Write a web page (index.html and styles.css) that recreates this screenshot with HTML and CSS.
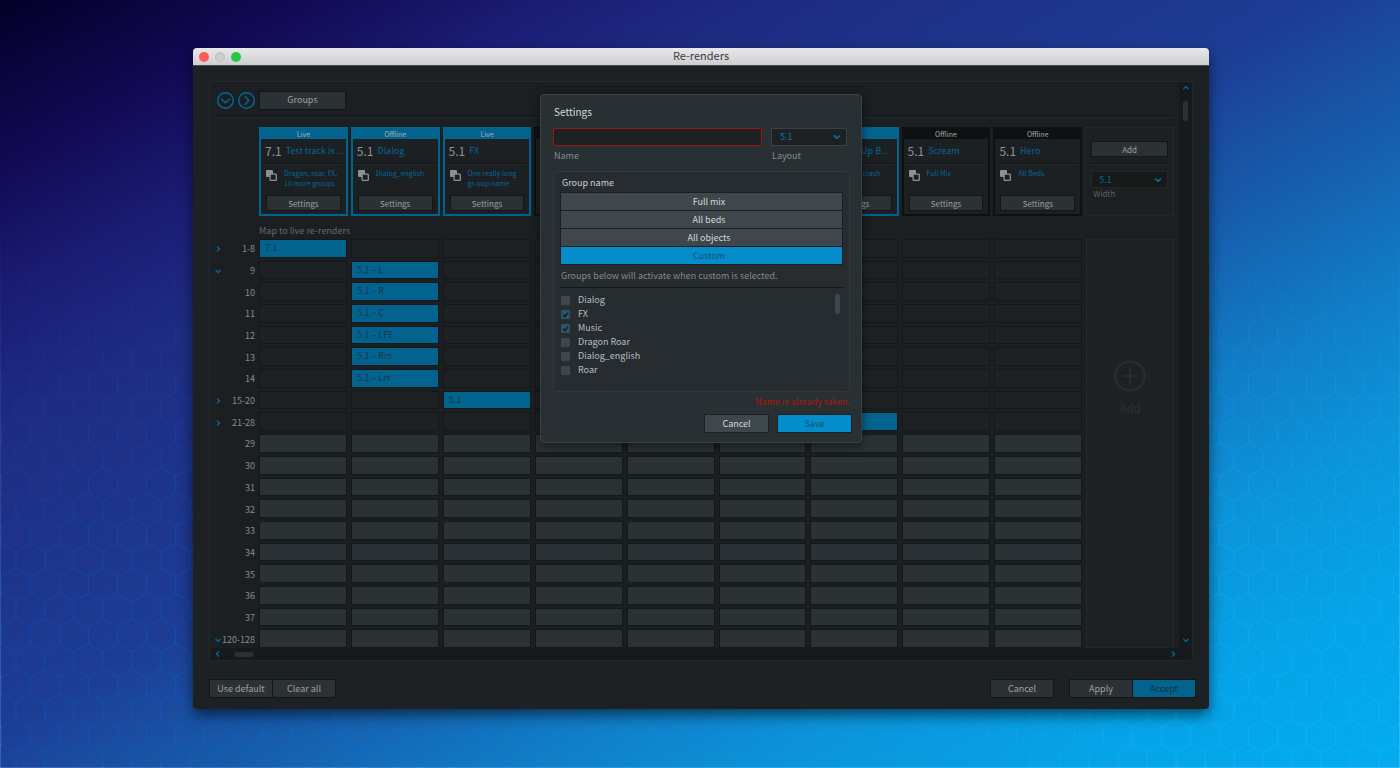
FILE: index.html
```html
<!DOCTYPE html>
<html lang="en">
<head>
  <meta charset="UTF-8" />
  <meta name="viewport" content="width=device-width, initial-scale=1.0" />
  <title>Re-renders</title>
  <link rel="stylesheet" href="styles.css">
</head>
<body>
  <svg class="hexes" aria-hidden="true">
    <defs>
      <pattern id="hex" width="29" height="50.25" patternUnits="userSpaceOnUse" patternTransform="translate(16 15.7)">
        <path d="M0 0 14.5 8.3 29 0M14.5 8.3V25.1M0 33.4 14.5 25.1 29 33.4M0 33.4V50.25M29 33.4V50.25" />
      </pattern>
      <linearGradient id="line-color">
        <stop offset="0" stop-color="#0852c8" />
        <stop offset="0.5" stop-color="#0488e0" />
        <stop offset="0.85" stop-color="#0cb8f6" />
      </linearGradient>
      <mask id="hex-mask">
        <rect width="100%" height="100%" fill="url(#hex)" />
      </mask>
    </defs>
    <rect width="100%" height="100%" fill="url(#line-color)" mask="url(#hex-mask)" />
  </svg>

  <div class="window">
    <header class="titlebar">
      <span class="light close"></span>
      <span class="light minimize"></span>
      <span class="light zoom"></span>
      <h1>Re-renders</h1>
    </header>

    <main class="content">
      <div class="panel">
        <div class="panel-main">
          <div class="toolbar">
            <button class="round" aria-label="Expand all">
              <svg viewBox="0 0 16 16"><circle cx="8" cy="8" r="7.3" /><path d="M3.8 6.4 8 10.2l4.2-3.8" /></svg>
            </button>
            <button class="round" aria-label="Collapse all">
              <svg viewBox="0 0 16 16"><circle cx="8" cy="8" r="7.3" /><path d="M6.4 3.8 10.2 8l-3.8 4.2" /></svg>
            </button>
            <button class="btn groups">Groups</button>
          </div>
          <hr class="rule">

          <div class="cards" id="cards">
            <section class="add-card">
              <button class="btn small">Add</button>
              <hr class="rule">
              <select id="width" class="dark-select"><option>5.1</option></select>
              <label for="width">Width</label>
            </section>
          </div>

          <p class="map-label">Map to live re-renders</p>
          <table class="matrix" aria-label="Map to live re-renders">
            <tbody id="matrix"></tbody>
          </table>

          <div class="scroll-x">
            <svg class="arrow" viewBox="0 0 8 8"><path d="M5 1.5 2.5 4 5 6.5" /></svg>
            <span class="thumb"></span>
            <svg class="arrow" viewBox="0 0 8 8"><path d="M3 1.5 5.5 4 3 6.5" /></svg>
          </div>
        </div>
        <div class="scroll-y">
          <svg class="arrow" viewBox="0 0 8 8"><path d="M1.5 5 4 2.5 6.5 5" /></svg>
          <span class="thumb"></span>
          <svg class="arrow" viewBox="0 0 8 8"><path d="M1.5 3 4 5.5 6.5 3" /></svg>
        </div>
      </div>

      <footer class="footer">
        <div class="joined">
          <button class="btn">Use default</button>
          <button class="btn">Clear all</button>
        </div>
        <button class="btn cancel">Cancel</button>
        <div class="joined">
          <button class="btn">Apply</button>
          <button class="btn accept">Accept</button>
        </div>
      </footer>
    </main>

    <dialog class="settings" open aria-labelledby="settings-title">
      <h2 id="settings-title">Settings</h2>
      <div class="fields">
        <div class="field name">
          <input type="text" id="name">
          <label for="name">Name</label>
        </div>
        <div class="field layout">
          <select id="layout"><option>5.1</option></select>
          <label for="layout">Layout</label>
        </div>
      </div>

      <section class="group-box">
        <h3>Group name</h3>
        <div class="choices">
          <button>Full mix</button>
          <button>All beds</button>
          <button>All objects</button>
          <button class="selected">Custom</button>
        </div>
        <p class="hint">Groups below will activate when custom is selected.</p>
        <hr class="rule">
        <div class="group-list">
          <div class="checks">
            <label><input type="checkbox"> Dialog</label>
            <label><input type="checkbox" checked> FX</label>
            <label><input type="checkbox" checked> Music</label>
            <label><input type="checkbox"> Dragon Roar</label>
            <label><input type="checkbox"> Dialog_english</label>
            <label><input type="checkbox"> Roar</label>
          </div>
          <span class="thumb"></span>
        </div>
      </section>

      <p class="error">Name is already taken.</p>
      <div class="actions">
        <button class="dialog-cancel">Cancel</button>
        <button class="save">Save</button>
      </div>
    </dialog>
  </div>

  <script src="script.js"></script>
</body>
</html>
```
FILE: script.js
```js
// One card per re-render
const tracks = [
  { state: "Live", layout: "7.1", name: "Test track is …", groups: "Dragon, roar, FX, 10 more groups", on: true },
  { state: "Offline", layout: "5.1", name: "Dialog", groups: "Dialog_english", on: true },
  { state: "Live", layout: "5.1", name: "FX", groups: "One really long gr-oup name", on: true },
  { state: "Offline", layout: "5.1", name: "", groups: "" },
  { state: "Offline", layout: "5.1", name: "", groups: "" },
  { state: "Offline", layout: "5.1", name: "", groups: "" },
  { state: "Live", layout: "7.1", name: "Wake Up B…", groups: "Window crash", on: true },
  { state: "Offline", layout: "5.1", name: "Scream", groups: "Full Mix" },
  { state: "Offline", layout: "5.1", name: "Hero", groups: "All Beds" }
];

// label, arrow, column of the mapped cell, text of the mapped cell
const rows = [
  ["1-8", "right", 0, "7.1"],
  ["9", "down", 1, "5.1 – L"],
  ["10", "", 1, "5.1 – R"],
  ["11", "", 1, "5.1 – C"],
  ["12", "", 1, "5.1 – LFE"],
  ["13", "", 1, "5.1 – Rrs"],
  ["14", "", 1, "5.1 – Lrs"],
  ["15-20", "right", 2, "5.1"],
  ["21-28", "right", 6, ""],
  ["29"], ["30"], ["31"], ["32"], ["33"], ["34"], ["35"], ["36"], ["37"],
  ["120-128", "down"]
];

const arrows = {
  right: '<svg class="arrow" viewBox="0 0 8 8"><path d="M3 1.5 5.5 4 3 6.5" /></svg>',
  down: '<svg class="arrow" viewBox="0 0 8 8"><path d="M1.5 3 4 5.5 6.5 3" /></svg>'
};

function renderCards() {
  const html = tracks.map(t => `
    <section class="card ${t.on ? "on" : ""}">
      <div class="state">${t.state}</div>
      <h2><span class="layout-tag">${t.layout}</span><span class="track-name">${t.name.replace("…", '<span class="dots">…</span>')}</span></h2>
      <hr class="rule">
      <div class="track-groups">
        <svg viewBox="0 0 11 11"><rect class="back" width="7" height="7" rx="1" /><rect class="front" x="4.1" y="4.1" width="6.2" height="6.2" rx="0.6" /></svg>
        <p>${t.groups}</p>
      </div>
      <button class="btn small">Settings</button>
    </section>`).join("");
  document.getElementById("cards").insertAdjacentHTML("afterbegin", html);
}

function renderMatrix() {
  const body = document.getElementById("matrix");
  rows.forEach(([label, arrow, column, text], index) => {
    const tr = document.createElement("tr");
    if (column === undefined) tr.className = "free";
    let html = `<th scope="row">${arrows[arrow] || ""}<span>${label}</span></th>`;
    for (let i = 0; i < tracks.length; i++) {
      html += i === column ? `<td class="mapped">${text}</td>` : "<td></td>";
    }
    if (index === 0) {
      html += `<td class="add-column" rowspan="${rows.length}"><button class="add-big">
        <svg viewBox="0 0 32 32"><circle cx="16" cy="16" r="14.5" /><path d="M16 8v16M8 16h16" /></svg>Add</button></td>`;
    }
    tr.innerHTML = html;
    body.appendChild(tr);
  });
}

renderCards();
renderMatrix();
```
FILE: styles.css
```css
* {
  box-sizing: border-box;
}

body {
  margin: 0;
  min-height: 100vh;
  padding: 48px 191px 59px 193px;
  display: flex;
  font-family: "Noto Sans CJK SC", "Noto Sans", sans-serif;
  font-size: 9px;
  line-height: 14px;
  color: #8f9395;
  background: linear-gradient(to bottom right, #020028 0%, #120a55 11%, #1b1d75 20%, #1e2c82 28%, #1d3c94 47%, #1660ae 59%, #117cc6 68%, #0c93d9 77%, #06a3e8 88%, #03acef 100%);
}

h1, h2, h3, p {
  margin: 0;
  font-size: 9px;
  font-weight: 400;
}

button, input, select {
  font: inherit;
  color: inherit;
  margin: 0;
  padding: 0;
  border: none;
  border-radius: 0;
  background: none;
}

svg {
  fill: none;
  stroke: currentColor;
}

.hexes {
  position: absolute;
  inset: 0;
  width: 100%;
  height: 100%;
  stroke: #fff;
  opacity: 0.6;
  mask-image: linear-gradient(to bottom, transparent 26%, #000 95%);
}

/* Window */
.window {
  position: relative;
  flex: 1;
  display: flex;
  flex-direction: column;
  border-radius: 4px;
  background: #1d2123;
  box-shadow: 0 6px 14px rgba(0, 0, 0, 0.55);
}

.titlebar {
  display: flex;
  align-items: center;
  gap: 6px;
  height: 18px;
  padding: 0 6px;
  border-radius: 4px 4px 0 0;
  border-bottom: 1px solid #4a4d4f;
  background: linear-gradient(#e8e7e9, #cfced0);
}

.titlebar h1 {
  flex: 1;
  margin-right: 48px;
  padding-bottom: 3px;
  font-size: 11px;
  text-align: center;
  color: #3c3c3e;
}

.light {
  width: 10px;
  height: 10px;
  border-radius: 50%;
}

.close { background: #fc5b57; }
.minimize { background: #cdcccd; border: 1px solid #c0bfc0; }
.zoom { background: #27c840; }

.content {
  flex: 1;
  display: flex;
  flex-direction: column;
  padding: 15px 13px 11px 16px;
}

.panel {
  flex: 1;
  display: flex;
  margin-right: 3px;
  border: 1px solid #24292b;
  border-radius: 4px;
  background: #1b1f21;
  overflow: hidden;
}

.panel-main {
  flex: 1;
  display: flex;
  flex-direction: column;
  min-width: 0;
  padding: 0 5px 0 6px;
}

.rule {
  width: 100%;
  height: 2px;
  margin: 0;
  border: none;
  border-top: 1px solid #121516;
  background: #262b2d;
}

.btn {
  height: 19px;
  line-height: 16px;
  border: 1px solid #131617;
  background: #2b3235;
  color: #9da0a2;
}

.btn.small {
  height: 16px;
  font-size: 8px;
  line-height: 13px;
}

/* Toolbar */
.toolbar {
  display: flex;
  align-items: center;
  gap: 4px;
  height: 34px;
  padding: 2px 0 0 1px;
}

.round {
  width: 17px;
  height: 17px;
  color: #046795;
}

.round svg {
  display: block;
  width: 17px;
  height: 17px;
  stroke-width: 1.4;
}

.groups {
  width: 87px;
}

/* Cards */
.cards {
  display: grid;
  grid-template-columns: repeat(10, minmax(0, 1fr));
  gap: 3px;
  margin-top: 9px;
  margin-left: 43px;
}

.card {
  display: flex;
  flex-direction: column;
  height: 89px;
  border: 2px solid #0e1011;
  background: #1c2022;
}

.state {
  flex: none;
  height: 10px;
  font-size: 7px;
  line-height: 10px;
  text-align: center;
  background: #0e1011;
  color: #a5a8aa;
}

.on { border-color: #02638f; }
.on .state { background: #02638f; color: #a5b0b5; }

.card h2 {
  flex: none;
  display: flex;
  align-items: center;
  gap: 4px;
  height: 24px;
  padding: 0 0 0 4px;
  color: #04679a;
}

.layout-tag {
  font-size: 12px;
  color: #8f9395;
}

.track-name {
  white-space: nowrap;
}

.dots {
  font-family: "Open Sans", sans-serif;
}

.card .rule,
.add-card .rule {
  width: auto;
  margin: 0 3px;
  flex: none;
}

.track-groups {
  flex: 1;
  display: flex;
  gap: 7px;
  padding: 3px 4px 0 5px;
  line-height: 10px;
  color: #04679a;
}

.track-groups p {
  font-size: 7px;
}

.track-groups svg {
  flex: none;
  width: 11px;
  height: 11px;
  margin-top: 2px;
  color: #8b9194;
}

.back {
  fill: currentColor;
  stroke: none;
}

.front {
  fill: #1c2022;
  stroke-width: 1.3;
}

.card .btn {
  margin: 0 5px 3px;
}

.add-card {
  display: flex;
  flex-direction: column;
  padding: 13px 5px 0;
  border: 1px solid #222729;
  background: #1c2022;
}

.add-card .rule {
  margin: 6px -2px;
}

.add-card label {
  padding: 0 2px;
  font-size: 8px;
  line-height: 11px;
  color: #5c6062;
}

select {
  appearance: none;
  height: 18px;
  padding: 0 8px;
  border: 1px solid #3a4144;
  color: #0579ae;
  background: #1d2123 url("data:image/svg+xml,%3Csvg xmlns='http://www.w3.org/2000/svg' viewBox='0 0 8 6' fill='none' stroke='%230579ae' stroke-width='1.5'%3E%3Cpath d='M1 1.5 4 4.3 7 1.5'/%3E%3C/svg%3E") no-repeat right 5px center / 8px 6px;
}

.dark-select {
  height: 17px;
  padding: 0 7px;
  border-color: #222729;
  color: #04679a;
  background-color: #151a19;
}

/* Matrix */
.map-label {
  padding: 8px 0 1px 43px;
  color: #66696b;
}

.matrix {
  flex: 1;
  display: grid;
  grid-template-columns: 39px repeat(10, minmax(0, 1fr));
  grid-auto-rows: minmax(16px, 1fr);
  gap: 3px 4px;
}

.matrix tbody,
.matrix tr {
  display: contents;
}

.matrix th {
  display: flex;
  align-items: center;
  justify-content: space-between;
  padding: 2px 0 0;
  font-weight: 400;
  color: #868a8c;
}

.matrix th span {
  margin-left: auto;
}

.arrow {
  flex: none;
  width: 8px;
  height: 8px;
  margin-left: -2px;
  color: #046795;
  stroke-width: 1.4;
}

.matrix th .arrow {
  margin-right: -4px;
}

.matrix td {
  padding: 0 5px;
  border: 1px solid #15181a;
  background: #1d2123;
}

.matrix .free td {
  background: #2b3235;
}

.matrix td.mapped {
  background: #02638f;
  line-height: 16px;
  color: #1a3645;
}

.matrix td.add-column {
  grid-column: 11;
  grid-row: 1 / span 19;
  display: flex;
  align-items: flex-start;
  justify-content: center;
  padding-top: 120px;
  border-color: #222729;
  background: #1d2123;
}

.add-big {
  display: flex;
  flex-direction: column;
  align-items: center;
  gap: 9px;
  font-size: 11px;
  font-weight: 700;
  color: #272c2e;
}

.add-big svg {
  width: 32px;
  height: 32px;
  stroke-width: 2.6;
}

/* Scroll bars */
.scroll-x {
  display: flex;
  align-items: center;
  height: 12px;
  margin: 0 -5px 0 -6px;
  padding: 0 2px 0 6px;
  background: #171a1c;
}

.scroll-x .arrow:last-child {
  margin-left: auto;
}

.scroll-x .thumb {
  width: 20px;
  height: 5px;
  margin-left: 12px;
}

.thumb {
  border-radius: 3px;
  background: #2b3235;
}

.scroll-y {
  display: flex;
  flex-direction: column;
  align-items: center;
  justify-content: space-between;
  width: 13px;
  padding: 2px 0 16px;
  background: #171a1c;
}

.scroll-y .arrow {
  margin-left: 0;
}

.scroll-y .thumb {
  width: 5px;
  height: 20px;
  margin: 9px 0 auto;
}

/* Footer */
.footer {
  display: flex;
  gap: 15px;
  margin-top: 18px;
}

.footer .btn {
  width: 64px;
}

.joined {
  display: flex;
}

.joined .btn + .btn {
  margin-left: -1px;
}

.footer .cancel {
  margin-left: auto;
}

.btn.accept {
  background: #02638f;
  color: #17323f;
}

/* Settings dialog */
.settings {
  position: absolute;
  top: 46px;
  right: 0;
  left: 0;
  width: 322px;
  margin: 0 auto;
  padding: 10px 11px 9px 12px;
  border: 1px solid #3a4144;
  border-radius: 4px;
  background: #293033;
  color: #b8bec1;
  box-shadow: 0 3px 10px rgba(0, 0, 0, 0.5);
}

.settings h2 {
  padding-left: 1px;
  font-size: 10px;
  color: #d8dbdd;
}

.fields {
  display: flex;
  gap: 9px;
  margin-top: 9px;
  padding-right: 3px;
}

.field {
  display: flex;
  flex-direction: column;
}

.field.name {
  flex: 1;
}

.field.layout {
  width: 76px;
}

.field input {
  height: 18px;
  padding: 0 6px;
  border: 1px solid #a01510;
  border-radius: 1px;
  background: #1d2123;
}

.field label {
  padding: 3px 1px 0;
  color: #858b8e;
}

.group-box {
  margin: 8px 0 0;
  padding: 4px 6px 14px;
  border: 1px solid #32393c;
  border-radius: 4px;
  background: #262c2f;
}

.group-box h3 {
  padding-left: 2px;
  color: #ccd0d2;
}

.choices {
  display: flex;
  flex-direction: column;
  gap: 1px;
  margin-top: 2px;
  padding: 1px;
  background: #1b1f21;
}

.choices button {
  height: 17px;
  padding-left: 15px;
  line-height: 17px;
  background: #3e474b;
  color: #d5d8da;
}

.choices .selected {
  background: #058dcb;
  color: #14506f;
}

.hint {
  padding: 4px 1px 4px;
  color: #858b8e;
}

.group-list {
  display: flex;
  justify-content: space-between;
  padding: 4px 3px 0 1px;
}

.group-list .thumb {
  width: 5px;
  height: 20px;
  margin-top: 1px;
  background: #3e474b;
}

.checks label {
  display: flex;
  align-items: center;
  gap: 8px;
}

.checks input {
  appearance: none;
  width: 9px;
  height: 9px;
  border-radius: 1px;
  background: #3e474b;
}

.checks input:checked {
  background: #2b5468 url("data:image/svg+xml,%3Csvg xmlns='http://www.w3.org/2000/svg' viewBox='0 0 8 8' fill='none' stroke='%23131c21' stroke-width='1.2'%3E%3Cpath d='M1.8 4.2 3.4 5.8 6.4 2.4'/%3E%3C/svg%3E");
}

.error {
  margin-top: 3px;
  text-align: right;
  color: #b01510;
}

.actions {
  display: flex;
  justify-content: flex-end;
  gap: 8px;
  margin: 5px -2px 0 0;
}

.actions button {
  height: 19px;
  line-height: 16px;
  border: 1px solid #1d2123;
  background: #3e474b;
  color: #d5d8da;
}

.actions .dialog-cancel {
  width: 65px;
}

.actions .save {
  width: 75px;
  background: #058dcb;
  color: #14506f;
}
```
